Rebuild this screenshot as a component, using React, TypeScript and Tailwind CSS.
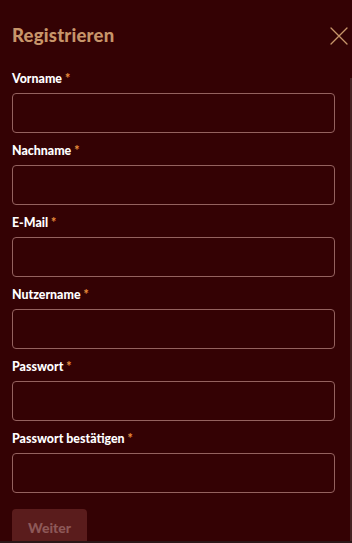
import React from "react";

const fields = [
  "Vorname",
  "Nachname",
  "E-Mail",
  "Nutzername",
  "Passwort",
  "Passwort bestätigen",
];

export default function App() {
  return (
    <div
      className="relative w-[352px] h-[543px] overflow-hidden bg-[#340204] text-white"
      style={{ fontFamily: "Lato, 'Noto Sans', sans-serif" }}
    >
      <div className="flex items-center justify-between pl-3 pr-[4px] pt-[23px] h-[47px]">
        <h1 className="text-[18.5px] leading-[24px] font-black text-[#c7956a] tracking-[0.2px]">
          Registrieren
        </h1>
        <button className="w-[18px] h-[18px] flex items-center justify-center mt-[1px]">
          <svg width="18" height="18" viewBox="0 0 18 18" fill="none">
            <path
              d="M1 1L17 17M17 1L1 17"
              stroke="#c7956a"
              strokeWidth="1.3"
              strokeLinecap="round"
            />
          </svg>
        </button>
      </div>
      <form className="flex flex-col pl-3 pr-[18px] pt-[24px]">
        {fields.map((f) => (
          <div key={f} className="flex flex-col mb-[10px]">
            <label className="text-[12.4px] leading-[16px] font-black text-white">
              {f} <span className="text-[#e58a3a]">*</span>
            </label>
            <input
              type="text"
              className="mt-[6px] h-[40px] w-[323px] rounded-[4px] border border-[#94625f] bg-transparent outline-none"
            />
          </div>
        ))}
        <div className="pt-[6px]">
          <button
            type="button"
            className="w-[75px] h-[36px] rounded-[4px] bg-[#5a1c1c] text-[#8d5858] text-[14px] font-black"
          >
            Weiter
          </button>
        </div>
      </form>
      <div className="absolute right-0 top-[78px] bottom-[2px] w-[2px] bg-[#442222]" />
      <div className="absolute left-0 right-0 bottom-0 h-[2px] bg-[#2a1717]" />
    </div>
  );
}
